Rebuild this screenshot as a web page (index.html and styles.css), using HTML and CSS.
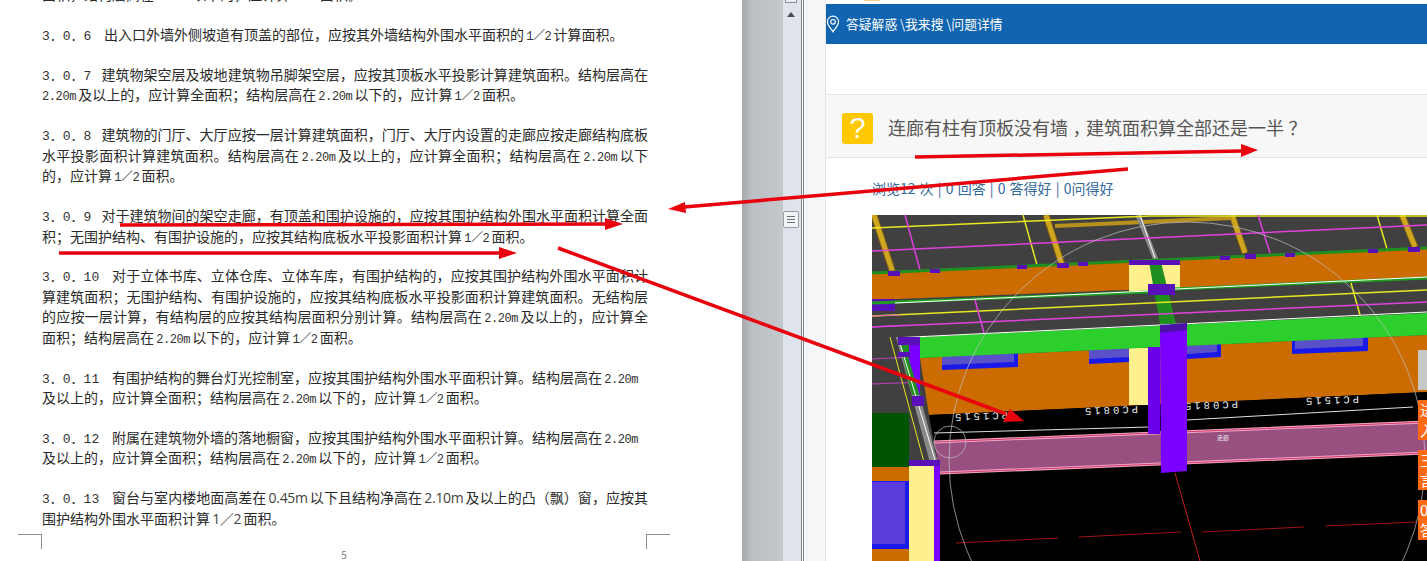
FILE: index.html
```html
<!DOCTYPE html>
<html lang="zh-CN">
<head>
    <meta charset="UTF-8">
    <title>建筑面积计算规范</title>
    <link rel="stylesheet" href="styles.css">
</head>
<body>
    <div class="screen">
        <!-- word document -->
        <div class="doc">
            <div class="para first">
                <p class="line">面积，结构层高在 <span class="latin">2.20m</span> 以下的，应计算 <span class="latin">1／2</span> 面积。</p>
            </div>
            <div class="para">
                <p class="line"><span class="num mid">3．0．6</span>出入口外墙外侧坡道有顶盖的部位，应按其外墙结构外围水平面积的 <span class="latin">1／2</span> 计算面积。</p>
            </div>
            <div class="para">
                <p class="line fill"><span class="num">3．0．7</span>建筑物架空层及坡地建筑物吊脚架空层，应按其顶板水平投影计算建筑面积。结构层高在</p>
                <p class="line"><span class="latin">2.20m</span> 及以上的，应计算全面积；结构层高在 <span class="latin">2.20m</span> 以下的，应计算 <span class="latin">1／2</span> 面积。</p>
            </div>
            <div class="para">
                <p class="line fill"><span class="num">3．0．8</span>建筑物的门厅、大厅应按一层计算建筑面积，门厅、大厅内设置的走廊应按走廊结构底板</p>
                <p class="line fill">水平投影面积计算建筑面积。结构层高在 <span class="latin">2.20m</span> 及以上的，应计算全面积；结构层高在 <span class="latin">2.20m</span> 以下</p>
                <p class="line">的，应计算 <span class="latin">1／2</span> 面积。</p>
            </div>
            <div class="para">
                <p class="line fill"><span class="num">3．0．9</span>对于建筑物间的架空走廊，有顶盖和围护设施的，应按其围护结构外围水平面积计算全面</p>
                <p class="line">积；无围护结构、有围护设施的，应按其结构底板水平投影面积计算 <span class="latin">1／2</span> 面积。</p>
            </div>
            <div class="para">
                <p class="line fill"><span class="num long">3．0．10</span>对于立体书库、立体仓库、立体车库，有围护结构的，应按其围护结构外围水平面积计</p>
                <p class="line fill">算建筑面积；无围护结构、有围护设施的，应按其结构底板水平投影面积计算建筑面积。无结构层</p>
                <p class="line fill">的应按一层计算，有结构层的应按其结构层面积分别计算。结构层高在 <span class="latin">2.20m</span> 及以上的，应计算全</p>
                <p class="line">面积；结构层高在 <span class="latin">2.20m</span> 以下的，应计算 <span class="latin">1／2</span> 面积。</p>
            </div>
            <div class="para">
                <p class="line"><span class="num long">3．0．11</span>有围护结构的舞台灯光控制室，应按其围护结构外围水平面积计算。结构层高在 <span class="latin">2.20m</span></p>
                <p class="line">及以上的，应计算全面积；结构层高在 <span class="latin">2.20m</span> 以下的，应计算 <span class="latin">1／2</span> 面积。</p>
            </div>
            <div class="para">
                <p class="line"><span class="num long">3．0．12</span>附属在建筑物外墙的落地橱窗，应按其围护结构外围水平面积计算。结构层高在 <span class="latin">2.20m</span></p>
                <p class="line">及以上的，应计算全面积；结构层高在 <span class="latin">2.20m</span> 以下的，应计算 <span class="latin">1／2</span> 面积。</p>
            </div>
            <div class="para">
                <p class="line fill"><span class="num long">3．0．13</span>窗台与室内楼地面高差在 <span class="sans">0.45m</span> 以下且结构净高在 <span class="sans">2.10m</span> 及以上的凸（飘）窗，应按其</p>
                <p class="line">围护结构外围水平面积计算 <span class="sans">1／2</span> 面积。</p>
            </div>
            <div class="page-foot">
                <span class="crop crop-left"></span>
                <span class="page-no">5</span>
                <span class="crop crop-right"></span>
            </div>
        </div>

        <div class="gutter"></div>

        <div class="scrollbar">
            <span class="scroll-split"></span>
            <span class="scroll-up"></span>
            <span class="scroll-thumb"><i></i><i></i><i></i></span>
        </div>

        <!-- browser window -->
        <div class="browser">
            <div class="site">
                <div class="site-top"><span class="site-top-mark"></span></div>
                <div class="crumbs">
                    <svg class="pin" viewBox="0 0 14 18" width="14" height="18">
                        <path d="M7 1.200C3.800 1.200 1.400 3.700 1.400 6.800c0 3.600 3.600 6.900 5.600 10 2-3.100 5.600-6.400 5.600-10 0-3.100-2.400-5.600-5.600-5.600z" fill="none" stroke="#fff" stroke-width="1.200"/>
                        <circle cx="7" cy="6.800" r="2.300" fill="none" stroke="#fff" stroke-width="1.200"/>
                    </svg>
                    <span>答疑解惑 \我来搜 \问题详情</span>
                </div>
                <div class="question">
                    <span class="q-icon">?</span>
                    <h1 class="q-title">连廊有柱有顶板没有墙<span class="q-punct">，</span>建筑面积算全部还是一半<span class="q-punct">？</span></h1>
                </div>
                <div class="stats">浏览12 次 | 0 回答 | 0 答得好 | 0问得好</div>
                <div class="shot">
                    <svg class="cad" viewBox="872 215 555 346" width="555" height="346">
                        <rect x="872" y="215" width="555" height="346" fill="#000"/>
                        <polygon points="872,215 1427,215 1427,392 929,415 872,415" fill="#404040"/>

                        <!-- upper grid -->
                        <g fill="none" stroke-linecap="butt">
                            <path d="M872 209L893 273M1046 215L1062 265M1232 215L1245 253M1402 215L1415 247" stroke="#7a5a12" stroke-width="7"/>
                            <path d="M872 209L893 273M1046 215L1062 265M1232 215L1245 253M1402 215L1415 247" stroke="#cfa620" stroke-width="5"/>
                            <path d="M1055 226L1232 218" stroke="#b8901c" stroke-width="4"/>
                            <path d="M1138 215L1156 260" stroke="#8a8a8a" stroke-width="5"/>
                            <path d="M1140 215L1155 258" stroke="#fff" stroke-width="1"/>
                            <path d="M872 228L1150 216M1150 216L1427 216M1023 215L1037 265M1377 215L1387 249" stroke="#e8e820" stroke-width="1.500"/>
                            <path d="M872 251L1427 225M905 215L920 270M1258 215L1270 253" stroke="#e040e0" stroke-width="1.500"/>
                        </g>

                        <!-- orange wall, upper -->
                        <polygon points="872,273 1427,248 1427,278 872,300" fill="#cc6b00"/>
                        <polygon points="1129,263 1180,263 1180,290 1129,292" fill="#fff08e"/>
                        <path d="M872 273L1427 248" stroke="#1f8f1f" stroke-width="3"/>
                        <polygon points="1149,262 1161,262 1176,324 1160,324" fill="#1f8f1f"/>
                        <g fill="#5a10b8">
                            <rect x="1129" y="260" width="51" height="5"/>
                            <rect x="1148" y="284" width="27" height="11"/>
                            <rect x="888" y="271" width="12" height="5"/>
                            <rect x="930" y="269" width="10" height="4"/>
                            <rect x="1017" y="265" width="10" height="4"/>
                            <rect x="1057" y="263" width="12" height="5"/>
                            <rect x="1078" y="262" width="10" height="4"/>
                            <rect x="1220" y="256" width="10" height="4"/>
                            <rect x="1245" y="254" width="11" height="5"/>
                            <rect x="1285" y="253" width="10" height="4"/>
                            <rect x="1368" y="249" width="10" height="4"/>
                            <rect x="1408" y="247" width="12" height="5"/>
                            <rect x="872" y="299" width="23" height="7"/>
                        </g>

                        <!-- middle strip -->
                        <g fill="none">
                            <path d="M872 303L1148 292M1175 289L1427 278" stroke="#1f9f1f" stroke-width="3"/>
                            <path d="M895 303L1148 291M1175 289L1427 277" stroke="#fff" stroke-width="1"/>
                            <path d="M872 316L1427 290M1351 283L1360 315" stroke="#e8e820" stroke-width="1.500"/>
                            <path d="M872 327L1427 302M975 300L984 333" stroke="#e040e0" stroke-width="1.500"/>
                        </g>

                        <!-- orange wall, lower -->
                        <polygon points="920,358 1427,335 1427,392 929,415" fill="#cc6b00"/>
                        <g fill="#1a1ae8">
                            <polygon points="942,356 1018,353 1018,367 942,370"/>
                            <polygon points="1089,350 1129,348 1129,362 1089,364"/>
                            <polygon points="1187,346 1221,344 1221,357 1187,359"/>
                            <polygon points="1292,340 1368,337 1368,351 1292,354"/>
                        </g>
                        <g fill="#5a50c8">
                            <polygon points="942,356 1014,353 1014,362 942,365"/>
                            <polygon points="1089,350 1129,348 1129,357 1089,359"/>
                            <polygon points="1187,346 1217,344 1217,352 1187,354"/>
                            <polygon points="1295,340 1363,337 1363,346 1295,349"/>
                        </g>
                        <rect x="1129" y="348" width="19" height="57" fill="#fff08e"/>

                        <!-- green beam -->
                        <polygon points="920,337 1427,313 1427,335 920,358" fill="#2ccf2c"/>
                        <path d="M872 339L1427 312" stroke="#fff" stroke-width="1"/>

                        <!-- left edge -->
                        <polygon points="872,337 896,337 929,415 938,463 872,463" fill="#404040"/>
                        <path d="M872 316L900 315M872 327L905 325M872 359L910 357M872 384L925 382" stroke="#e040e0" stroke-width="1" opacity=".8"/>
                        <polygon points="896,337 904,337 938,463 930,463" fill="#8a8a8a"/>
                        <polygon points="900,345 910,345 921,395 912,395" fill="#1f8f1f"/>
                        <path d="M899 340L935 460" stroke="#fff" stroke-width="1"/>
                        <polygon points="909,337 920,337 920,396 909,360" fill="#7a00ff"/>
                        <rect x="898" y="337" width="22" height="8" fill="#5a10b8"/>
                        <rect x="872" y="305" width="23" height="6" fill="#5a10b8"/>
                        <rect x="898" y="352" width="12" height="5" fill="#5a10b8"/>
                        <rect x="912" y="396" width="12" height="10" fill="#5a10b8"/>
                        <path d="M890 337L924 462" stroke="#e8e820" stroke-width="1"/>

                        <!-- black zone -->
                        <polygon points="929,415 1427,392 1427,561 940,561 940,473" fill="#000"/>
                        <path d="M934 433L1149 427M1187 420L1413 407" stroke="#ddd" stroke-width="1"/>
                        <polygon points="934,442 1427,422 1427,453 940,473" fill="#985080"/>
                        <path d="M934 442L1427 422M940 473L1427 453" stroke="#f0a8c8" stroke-width="3"/>
                        <path d="M934 442L1427 422M940 473L1427 453" stroke="#d8386a" stroke-width="1"/>
                        <g class="cad-label">
                            <text transform="rotate(178 980 417)" x="980" y="421">PC1515</text>
                            <text transform="rotate(178 1110 411)" x="1110" y="415">PC0815</text>
                            <text transform="rotate(178 1210 406)" x="1210" y="410">PC0815</text>
                            <text transform="rotate(178 1331 401)" x="1331" y="405">PC1515</text>
                        </g>
                        <text class="cad-small" x="1223" y="440">走廊</text>
                        <path d="M956 543L1058 538M1079 537L1181 532M1202 532L1304 527M1325 526L1417 522" stroke="#a01414" stroke-width="1"/>
                        <path d="M1175 473L1200 561" stroke="#c02020" stroke-width="1"/>

                        <!-- columns -->
                        <rect x="1148" y="347" width="12" height="87" fill="#6a00e8"/>
                        <polygon points="1160,330 1187,328 1187,471 1161,473" fill="#7a00ff"/>
                        <polygon points="1160,325 1187,323 1187,330 1160,333" fill="#4a12a8"/>

                        <!-- lower left block -->
                        <rect x="872" y="413" width="37" height="54" fill="#005500"/>
                        <rect x="872" y="467" width="37" height="94" fill="#cc6b00"/>
                        <rect x="872" y="481" width="37" height="68" fill="#1a1ae8"/>
                        <rect x="872" y="482" width="33" height="62" fill="#5a3cdc"/>
                        <rect x="909" y="465" width="25" height="96" fill="#fff08e"/>
                        <rect x="934" y="460" width="6" height="101" fill="#7a00ff"/>
                        <rect x="909" y="460" width="31" height="6" fill="#5a10b8"/>

                        <!-- circles on top -->
                        <circle cx="1187" cy="460" r="238" fill="none" stroke="#c0c0c0" stroke-width="1" opacity=".7"/>
                        <circle cx="950" cy="442" r="16" fill="none" stroke="#c0c0c0" stroke-width="1" opacity=".7"/>
                    </svg>
                    <div class="side-tabs">
                        <span class="tab tab-grey"></span>
                        <span class="tab">进<br>入</span>
                        <span class="tab">三<br>言</span>
                        <span class="tab">0<br>答</span>
                    </div>
                </div>
            </div>
        </div>

        <!-- red marks drawn on the screenshot -->
        <svg class="marks" viewBox="0 0 1427 561" width="1427" height="561">
            <g stroke="#e8000c" stroke-width="3.500" fill="none">
                <path d="M915 157L1242 151"/>
                <path d="M1128 169L684 207"/>
                <path d="M120 225L606 224"/>
                <path d="M59 253L500 253"/>
                <path d="M558 248L1006 414"/>
            </g>
            <g fill="#e8000c">
                <polygon points="1258,150 1241,144 1241,157"/>
                <polygon points="668,209 685,202 686,213"/>
                <polygon points="623,224 605,218 605,230"/>
                <polygon points="517,253 499,247 499,259"/>
                <polygon points="1024,421 1010,409 1003,422"/>
            </g>
        </svg>
    </div>
</body>
</html>
```

FILE: styles.css
```css
html, body {
    margin: 0;
    padding: 0;
    background-color: #fff;
}

.screen {
    position: relative;
    display: flex;
    width: 1427px;
    height: 561px;
    overflow: hidden;
    font-family: "Noto Sans CJK SC", "Liberation Sans", sans-serif;
}

/* word document */
.doc {
    flex: 0 0 742px;
    box-sizing: border-box;
    padding-left: 42px;
    padding-right: 94px;
    background-color: #fff;
    color: #2a2a2a;
    font-size: 14px;
}

.para {
    margin-bottom: 19.6px;
}

.para.first {
    margin-top: -16px;
}

.line {
    margin: 0;
    height: 20.4px;
    line-height: 20.4px;
    white-space: nowrap;
    word-spacing: -1px;
}

.line.fill {
    white-space: normal;
    text-align: justify;
    text-align-last: justify;
}

.num {
    display: inline-block;
    width: 59.5px;
    text-align-last: left;
    font-family: "Liberation Mono", "Noto Sans CJK SC", monospace;
    font-size: 13px;
    color: #333;
}

.num.mid {
    width: 62px;
}

.num.long {
    width: 70px;
}

.latin {
    font-family: "Liberation Mono", "Noto Sans CJK SC", monospace;
    font-size: 12px;
    letter-spacing: -0.4px;
    color: #333;
}

.sans {
    font-family: "Open Sans", "Noto Sans CJK SC", sans-serif;
    font-size: 14px;
    letter-spacing: -0.3px;
    color: #444;
}

.page-foot {
    display: flex;
    justify-content: space-between;
    align-items: flex-start;
    margin: -14px -22px 0 -24px;
}

.crop {
    width: 23px;
    height: 14px;
    border-top: 1px solid #8f8f8f;
}

.crop-left {
    border-right: 1px solid #8f8f8f;
}

.crop-right {
    border-left: 1px solid #8f8f8f;
}

.page-no {
    margin-top: 14px;
    font-size: 10px;
    line-height: 14px;
    color: #777;
}

/* space between the document and the scrollbar */
.gutter {
    flex: 0 0 41px;
    background: linear-gradient(to right, #a4a6aa 0, #bcbfc3 10px, #c4c7cb 100%);
}

.scrollbar {
    position: relative;
    flex: 0 0 18px;
    background-color: #dfe4ec;
}

.scroll-split {
    display: block;
    width: 12px;
    height: 3px;
    margin-left: 2px;
    box-sizing: border-box;
    border: 1px solid #8d8f92;
    border-top: none;
    background-color: #eceff3;
}

.scroll-up {
    display: block;
    width: 0;
    margin: 9px 0 0 4px;
    border-left: 4px solid transparent;
    border-right: 4px solid transparent;
    border-bottom: 5px solid #4a4d52;
}

.scroll-thumb {
    display: flex;
    flex-direction: column;
    justify-content: center;
    gap: 2px;
    box-sizing: border-box;
    width: 16px;
    height: 17px;
    margin-top: 194px;
    padding: 0 3px;
    background-color: #f2f4f7;
    border: 1px solid #9a9da2;
    border-radius: 2px;
}

.scroll-thumb i {
    display: block;
    height: 1px;
    background-color: #6d7075;
}

/* browser */
.browser {
    flex: 1;
    display: flex;
    box-sizing: border-box;
    padding-left: 21px;
    background-color: #f5f6f7;
    border-left: 3px double #85888c;
    min-width: 0;
}

.site {
    flex: 1;
    min-width: 0;
    background-color: #fff;
    border-left: 1px solid #e4e4e4;
}

.site-top {
    height: 4px;
    padding-left: 38px;
}

.site-top-mark {
    display: block;
    width: 16px;
    height: 1px;
    background-color: #f2cf7c;
}

.crumbs {
    display: flex;
    align-items: center;
    gap: 6px;
    box-sizing: border-box;
    height: 40px;
    padding-bottom: 1px;
    background-color: #1064b0;
    color: #fff;
    font-size: 12.8px;
}

.pin {
    flex: none;
}

.question {
    display: flex;
    align-items: center;
    gap: 15px;
    box-sizing: border-box;
    height: 64px;
    margin-top: 50px;
    padding: 5px 0 0 16px;
    background-color: #f7f7f7;
    border-top: 1px solid #e5e5e5;
    border-bottom: 1px solid #e5e5e5;
}

.q-icon {
    flex: none;
    width: 31px;
    height: 31px;
    border-radius: 3px;
    background-color: #ffc800;
    color: #fff;
    font-family: "Liberation Sans", sans-serif;
    font-size: 29px;
    line-height: 31px;
    text-align: center;
}

.q-title {
    margin: 0;
    padding-bottom: 4px;
    font-size: 18px;
    font-weight: 400;
    color: #555;
    white-space: nowrap;
}

/* half width punctuation, centred in a full cell */
.q-punct {
    padding: 0 4.5px;
    font-feature-settings: "halt";
}

.stats {
    margin: 20px 0 0 46px;
    font-size: 14px;
    line-height: 20px;
    word-spacing: 1px;
    color: #33689c;
    white-space: nowrap;
}

.shot {
    position: relative;
    margin: 17px 0 0 46px;
    height: 346px;
    overflow: hidden;
}

.cad {
    display: block;
}

.cad-label {
    font-family: "Liberation Mono", monospace;
    font-size: 10.5px;
    letter-spacing: 3px;
    text-anchor: middle;
    fill: #eee;
}

.cad-small {
    font-size: 6px;
    text-anchor: middle;
    fill: #eee;
}

.side-tabs {
    position: absolute;
    top: 135px;
    right: 0;
    display: flex;
    flex-direction: column;
    gap: 10px;
    width: 9px;
}

.tab {
    display: block;
    box-sizing: border-box;
    height: 40px;
    padding-left: 2px;
    overflow: hidden;
    background-color: #ff6a13;
    color: #fff;
    font-size: 15px;
    line-height: 20px;
    white-space: nowrap;
}

.tab-grey {
    background-color: #c8c8c8;
}

/* hand drawn arrows */
.marks {
    position: absolute;
    top: 0;
    left: 0;
    pointer-events: none;
}
```
